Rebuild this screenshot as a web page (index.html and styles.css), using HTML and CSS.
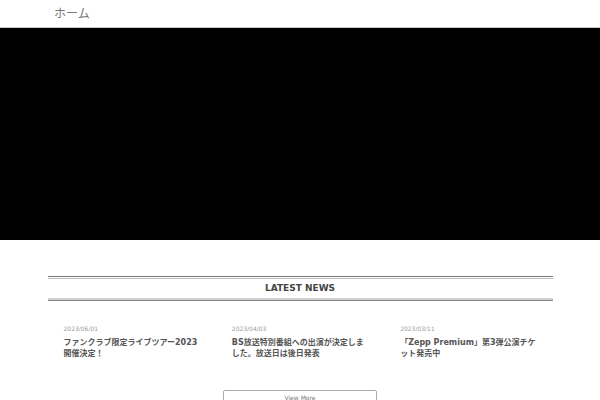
FILE: index.html
```html
<!DOCTYPE html>
<html lang="ja">
<head>
<meta charset="utf-8">
<title>ホーム</title>
<link rel="stylesheet" href="styles.css">
</head>
<body>
<header class="site-header">
  <div class="logo">ホーム</div>
</header>
<div class="hero"></div>
<main class="content">
  <div class="section-title">
    <div class="section-title-inner">LATEST NEWS</div>
  </div>
  <ul class="news-list">
    <li class="news-item">
      <div class="news-date">2023/06/01</div>
      <div class="news-title">ファンクラブ限定ライブツアー2023開催決定！</div>
    </li>
    <li class="news-item">
      <div class="news-date">2023/04/03</div>
      <div class="news-title">BS放送特別番組への出演が決定しました。放送日は後日発表</div>
    </li>
    <li class="news-item">
      <div class="news-date">2023/03/11</div>
      <div class="news-title">「Zepp Premium」第3弾公演チケット発売中</div>
    </li>
  </ul>
  <div class="more">
    <a class="more-button" href="#">View More</a>
  </div>
</main>
</body>
</html>
```

FILE: styles.css
```css
* {
  box-sizing: border-box;
}

html, body {
  margin: 0;
  padding: 0;
  background: #ffffff;
}

body {
  font-family: "DejaVu Sans", "Noto Sans CJK JP", sans-serif;
  color: #555;
  overflow: hidden;
}

.site-header {
  height: 28px;
  border-bottom: 1px solid #c8c8c8;
  padding: 2px 0 0 54px;
}

.logo {
  font-size: 12px;
  line-height: 25px;
  color: #777;
}

.hero {
  height: 212px;
  background: #000;
}

.content {
  width: 505px;
  margin: 36px auto 0;
}

.section-title {
  border-top: 1px solid #7a7a7a;
  border-bottom: 1px solid #888;
  padding-top: 1px;
}

.section-title-inner {
  border-top: 1px solid #bdbdbd;
  border-bottom: 2px solid #cfcfcf;
  font-size: 9px;
  font-weight: bold;
  line-height: 19px;
  text-align: center;
  color: #444;
}

.news-list {
  list-style: none;
  margin: 24px 0 0;
  padding: 0;
  display: grid;
  grid-template-columns: repeat(3, 1fr);
}

.news-item {
  padding: 0 16px;
}

.news-date {
  font-size: 6px;
  line-height: 8px;
  color: #9a9a9a;
  margin-bottom: 4px;
}

.news-title {
  font-size: 8px;
  font-weight: bold;
  line-height: 11px;
  color: #555;
}

.more {
  display: flex;
  justify-content: center;
  margin-top: 31px;
}

.more-button {
  display: block;
  width: 154px;
  height: 22px;
  border: 1px solid #aaa;
  border-radius: 2px;
  padding-top: 3px;
  font-size: 6px;
  line-height: 8px;
  text-align: center;
  color: #777;
  text-decoration: none;
}
```
